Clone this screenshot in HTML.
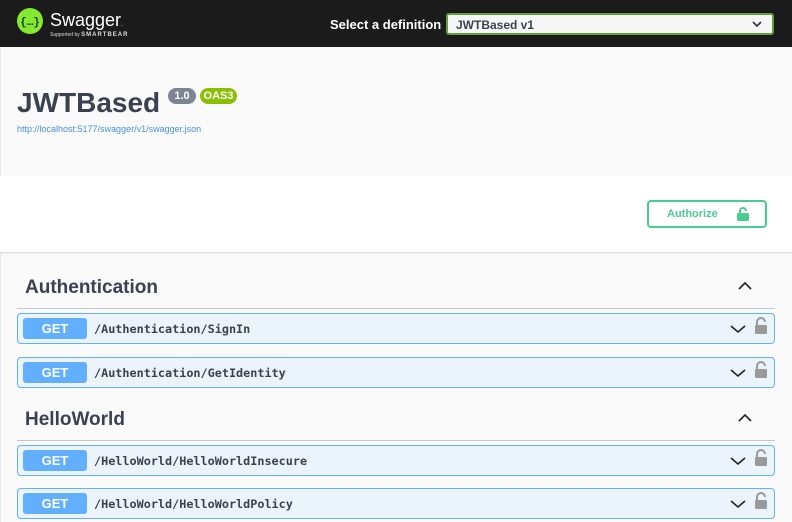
<!DOCTYPE html><html><head><style>
*{margin:0;padding:0;box-sizing:border-box}
body{width:792px;height:522px;overflow:hidden;background:#fafafa;font-family:"Liberation Sans",sans-serif;position:relative}
.edge{position:absolute;left:0;top:47px;width:1px;height:475px;background:#e8e8e8}
.hdr{position:absolute;left:0;top:0;width:792px;height:47px;background:#1b1b1b}
.abs{position:absolute}
.op{position:absolute;left:17px;width:758px;height:31px;background:#ebf3fb;border:1px solid #61affe;border-radius:4px}
.op .m{position:absolute;left:5px;top:4px;width:64px;height:21px;background:#61affe;border-radius:3px;color:#fff;font-weight:bold;font-size:13px;text-align:center;line-height:21px}
.op .p{position:absolute;left:76px;top:8px;font-family:"DejaVu Sans Mono","Liberation Mono",monospace;font-size:11.8px;font-weight:bold;color:#3b4151}
.tag{position:absolute;left:25px;font-size:19px;font-weight:bold;color:#3b4151}
.line{position:absolute;left:17px;width:758px;height:1px;background:#c8c8c8}
</style></head><body>
<div class="edge"></div>
<div class="hdr">
<svg class="abs" style="left:17px;top:8px" width="26" height="26" viewBox="0 0 26 26"><circle cx="13" cy="13" r="13" fill="#85ea2d"/><text x="13" y="17" font-size="11" font-family="Liberation Mono" font-weight="bold" text-anchor="middle" fill="#173647">{…}</text></svg>
<div class="abs" style="left:50px;top:10px;color:#fff;font-size:18px">Swagger<span style="font-size:6px">.</span></div>
<div class="abs" style="left:50px;top:32px;color:#ddd;font-size:5px">Supported by <b style="font-size:6px;letter-spacing:1px">SMARTBEAR</b></div>
<div class="abs" style="left:330px;top:17px;color:#fff;font-size:13px;font-weight:bold">Select a definition</div>
<div class="abs" style="left:446px;top:13px;width:328px;height:22px;background:#f7f7f7;border:2px solid #62a03f;border-radius:3px;font-size:12px;font-weight:bold;color:#3b4151;padding:3px 0 0 8px">JWTBased v1
<svg class="abs" style="right:10px;top:6px" width="10" height="7" viewBox="0 0 10 7"><path d="M1 1l4 4 4-4" stroke="#333" stroke-width="1.6" fill="none"/></svg></div>
</div>
<div class="abs" style="left:17px;top:87px;font-size:28px;font-weight:bold;color:#3b4151">JWTBased</div>
<div class="abs" style="left:168px;top:88px;height:16px;width:28px;text-align:center;background:#7d8492;border-radius:8px;color:#fff;font-size:11px;font-weight:bold;line-height:16px">1.0</div>
<div class="abs" style="left:200px;top:88px;height:16px;width:37px;text-align:center;background:#89bf04;border-radius:8px;color:#fff;font-size:11px;font-weight:bold;line-height:16px">OAS3</div>
<div class="abs" style="left:17px;top:124px;font-size:9px;color:#4990e2">http://localhost:5177/swagger/v1/swagger.json</div>
<div class="abs" style="left:0;top:176px;width:792px;height:76px;background:#fff;box-shadow:0 1px 2px rgba(0,0,0,.15)">
<div class="abs" style="left:647px;top:24px;width:120px;height:28px;border:2px solid #49cc90;border-radius:4px;color:#49cc90;font-size:11px;font-weight:bold;padding:6px 0 0 18px">Authorize
<svg class="abs" style="left:88px;top:5px" width="12" height="14" viewBox="0 0 12 14"><path d="M3 7V4a3 3 0 0 1 6 0" stroke="#49cc90" stroke-width="2" fill="none"/><rect x="0" y="6" width="12" height="8" rx="1.5" fill="#49cc90"/></svg></div>
</div>
<div class="tag" style="top:277px">Authentication</div>
<svg class="abs" style="left:738px;top:281px" width="14" height="9"><path d="M1 8l6-6 6 6" stroke="#222" stroke-width="1.6" fill="none"/></svg>
<div class="line" style="top:308px"></div>
<div class="tag" style="top:409px">HelloWorld</div>
<svg class="abs" style="left:738px;top:413px" width="14" height="9"><path d="M1 8l6-6 6 6" stroke="#222" stroke-width="1.6" fill="none"/></svg>
<div class="line" style="top:440px"></div>
<div class="op" style="top:313px"><div class="m">GET</div><div class="p">/Authentication/SignIn</div></div>
<div class="op" style="top:357px"><div class="m">GET</div><div class="p">/Authentication/GetIdentity</div></div>
<div class="op" style="top:445px"><div class="m">GET</div><div class="p">/HelloWorld/HelloWorldInsecure</div></div>
<div class="op" style="top:488px"><div class="m">GET</div><div class="p">/HelloWorld/HelloWorldPolicy</div></div>
<svg class="abs" style="left:0;top:0" width="792" height="522">
<g id="ic"><path d="M731 326l7 6 7-6" stroke="#222" stroke-width="1.6" fill="none"/><path d="M757 325v-3a4 4 0 0 1 8 0" stroke="#999" stroke-width="2" fill="none"/><rect x="755" y="325" width="12" height="9" rx="1.5" fill="#999"/></g>
<use href="#ic" y="44"/><use href="#ic" y="132"/><use href="#ic" y="175"/>
</svg>
</body></html>
